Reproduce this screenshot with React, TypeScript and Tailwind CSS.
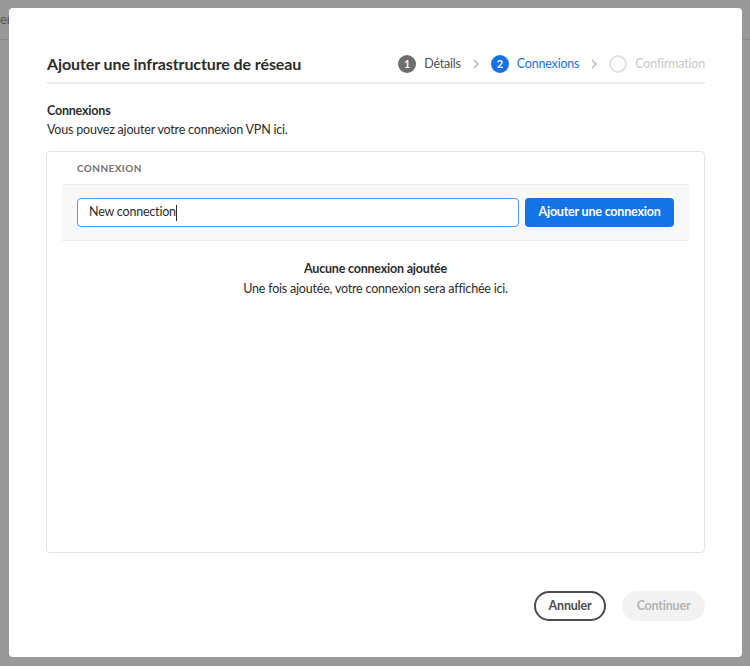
import React from 'react';

const font = { fontFamily: 'Lato, "Noto Sans", sans-serif' };

function Chevron() {
    return (
        <svg className="w-[10px] h-[10px] text-[#b3b3b3]" viewBox="0 0 10 10" fill="none" stroke="currentColor" strokeWidth={1.4} strokeLinecap="round" strokeLinejoin="round">
            <path d="M3.5 1.5L7 5L3.5 8.5" />
        </svg>
    );
}

function Stepper() {
    return (
        <div className="flex items-center text-[12.5px] tracking-[-0.2px]">
            <span className="w-[18px] h-[18px] rounded-full bg-[#6e6e6e] text-white text-[11px] font-bold flex items-center justify-center">1</span>
            <span className="ml-[8px] text-[#505050]">Détails</span>
            <span className="mx-[10px]"><Chevron /></span>
            <span className="w-[18px] h-[18px] rounded-full bg-[#1473e6] text-white text-[11px] font-bold flex items-center justify-center">2</span>
            <span className="ml-[8px] text-[#1473e6]">Connexions</span>
            <span className="mx-[10px]"><Chevron /></span>
            <span className="w-[18px] h-[18px] rounded-full border-2 border-[#e1e1e1]" />
            <span className="ml-[8px] text-[#c8c8c8]">Confirmation</span>
        </div>
    );
}

export default function App() {
    return (
        <div className="relative w-[750px] h-[666px] overflow-hidden bg-[#999999]" style={font}>
            {/* page behind the overlay */}
            <div className="h-[40px] border-b border-[#8a8a8a] flex items-center">
                <span className="text-[13px] text-[#555]">er</span>
            </div>

            <div className="absolute left-[9px] top-[8px] w-[733px] h-[649px] bg-white rounded-[4px] pl-[38px] pr-[37px] flex flex-col">
                <div className="flex items-center justify-between pt-[44px] pb-[6px] border-b-2 border-[#eaeaea]">
                    <h2 className="text-[16px] leading-[24px] font-bold tracking-[-0.1px] text-[#2c2c2c]">Ajouter une infrastructure de réseau</h2>
                    <Stepper />
                </div>

                <div className="mt-[17px] text-[12.5px] tracking-[-0.2px] text-[#2c2c2c]">
                    <div className="font-bold leading-[19px]">Connexions</div>
                    <div className="leading-[19px]">Vous pouvez ajouter votre connexion VPN ici.</div>
                </div>

                <div className="mt-[12px] -ml-px h-[402px] border border-[#e4e4e4] rounded-[4px] flex flex-col">
                    <div className="h-[32px] pl-[30px] flex items-center text-[10px] font-bold tracking-[0.4px] text-[#707070]">CONNEXION</div>
                    <div className="ml-[15px] mr-[15px] h-[57px] bg-[#f8f8f8] border-y border-[#eeeeee] flex items-center gap-[6px] px-[15px]">
                        <div className="flex-1 h-[29px] bg-white border border-[#4a9cf5] rounded-[4px] flex items-center px-[11px] text-[12.5px] tracking-[-0.2px] text-[#2c2c2c]">
                            New connection<span className="w-px h-[16px] bg-[#2c2c2c]" />
                        </div>
                        <button className="h-[29px] w-[149px] rounded-[4px] bg-[#1473e6] text-white text-[12.5px] tracking-[-0.2px] font-bold">Ajouter une connexion</button>
                    </div>
                    <div className="mt-[18px] text-center text-[12.5px] tracking-[-0.2px] text-[#2c2c2c]">
                        <div className="font-bold leading-[20px]">Aucune connexion ajoutée</div>
                        <div className="leading-[20px]">Une fois ajoutée, votre connexion sera affichée ici.</div>
                    </div>
                </div>

                <div className="mt-[38px] flex justify-end gap-[16px]">
                    <button className="h-[30px] w-[72px] rounded-full border-2 border-[#4b4b4b] text-[12.5px] tracking-[-0.2px] font-bold text-[#4b4b4b]">Annuler</button>
                    <button className="h-[30px] w-[83px] rounded-full bg-[#f2f2f2] text-[12.5px] tracking-[-0.2px] font-bold text-[#b3b3b3]">Continuer</button>
                </div>
            </div>
        </div>
    );
}
